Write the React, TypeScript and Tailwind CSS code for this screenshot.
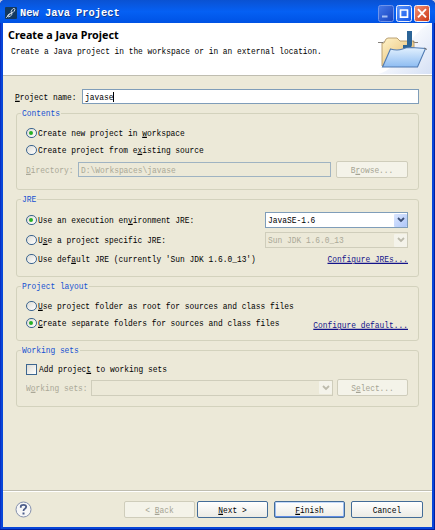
import React from "react";

const mono = "font-['Liberation_Mono','Noto_Sans_CJK_SC',monospace]";

function T({ children, className = "" }: { children: React.ReactNode; className?: string }) {
  return (
    <span className={`block whitespace-pre text-[7.9px] leading-[12px] scale-y-[1.25] ${mono} ${className}`}>
      {children}
    </span>
  );
}

function U({ children }: { children: React.ReactNode }) {
  return <span className="underline decoration-[0.8px] underline-offset-1">{children}</span>;
}

function Radio({ on = false }: { on?: boolean }) {
  return (
    <span className="flex size-[10.5px] shrink-0 items-center justify-center rounded-full border border-[#3d6690] bg-linear-to-br from-[#dddcd5] to-white">
      {on && <span className="size-[4px] rounded-full bg-[#27b027]" />}
    </span>
  );
}

function Option({ on, children }: { on?: boolean; children: React.ReactNode }) {
  return (
    <div className="flex h-[12px] items-center gap-[1.5px]">
      <Radio on={on} />
      <T>{children}</T>
    </div>
  );
}

function Group({ title, className, children }: { title: string; className: string; children: React.ReactNode }) {
  return (
    <section className={`relative ml-[13px] w-[403px] rounded-[3px] border border-[#d3d2bd] ${className}`}>
      <span className="absolute -top-[7px] left-[4px] bg-[#ece9d8] px-[1px] text-[#1450d2]">
        <T>{title}</T>
      </span>
      {children}
    </section>
  );
}

function Button({ kind = "normal", className = "", children }: { kind?: "normal" | "disabled" | "default"; className?: string; children: React.ReactNode }) {
  const look = {
    normal: "border-[#436c98] bg-linear-to-b from-white to-[#ecebe5] text-black",
    disabled: "border-[#cfcdbb] bg-[#f4f3e9] text-[#a5a393]",
    default: "border-[#436c98] bg-linear-to-b from-white to-[#ecebe5] text-black shadow-[inset_0_-1px_0_#5f8ce4,inset_0_1px_0_#c5dafa,inset_1px_0_0_#9dbdf0,inset_-1px_0_0_#9dbdf0]",
  }[kind];
  return (
    <button className={`flex h-[17px] items-center justify-center rounded-[2px] border ${look} ${className}`}>
      <T>{children}</T>
    </button>
  );
}

function Chevron({ disabled = false }: { disabled?: boolean }) {
  return (
    <span className={`flex h-[13px] w-[13px] items-center justify-center rounded-[1px] ${disabled ? "bg-[#f4f3ea] text-[#bdbbac]" : "bg-linear-to-br from-[#dbe6fe] to-[#aec6f8] text-[#3c4f76]"}`}>
      <svg width="8" height="6" viewBox="0 0 8 6" fill="none" stroke="currentColor" strokeWidth="1.8">
        <path d="M1 1 4 4 7 1" />
      </svg>
    </span>
  );
}

function AppIcon() {
  return (
    <svg width="12" height="12" viewBox="0 0 12 12" className="shrink-0">
      <rect width="12" height="12" rx="1" fill="#12385f" />
      <g fill="none" stroke="#d8e1eb" strokeWidth=".9">
        <ellipse cx="8" cy="3.6" rx="1.3" ry="2.5" transform="rotate(35 8 3.6)" />
        <ellipse cx="4.8" cy="8" rx="1.2" ry="2.6" transform="rotate(55 4.8 8)" />
        <path d="M1 10.8 7.5 5" />
      </g>
    </svg>
  );
}

function WindowButton({ kind }: { kind: "min" | "max" | "close" }) {
  return (
    <svg width="16" height="17" viewBox="0 0 16 17">
      <defs>
        <linearGradient id={`w-${kind}`} x1="0" y1="0" x2="1" y2="1">
          <stop stopColor={kind === "close" ? "#f39478" : kind === "max" ? "#5b95fb" : "#4479ea"} />
          <stop offset="1" stopColor={kind === "close" ? "#cb3410" : kind === "max" ? "#1054e8" : "#1742bd"} />
        </linearGradient>
      </defs>
      <rect x=".5" y=".5" width="15" height="16" rx="2" fill={`url(#w-${kind})`} stroke={kind === "min" ? "#6f94ea" : "#edf1fc"} />
      {kind === "min" && <path d="M4 11.5h5.5" stroke="#a6bff4" strokeWidth="2" />}
      {kind === "max" && <path d="M4 5h8M4.5 4.5v7.7h7V4.5" fill="none" stroke="#fff" strokeWidth="1.7" />}
      {kind === "close" && <path d="m4 4.2 8 8.2m0-8.2-8 8.2" stroke="#fff" strokeWidth="1.9" />}
    </svg>
  );
}

function FolderArt() {
  return (
    <svg width="59" height="51" viewBox="0 0 59 51">
      <defs>
        <linearGradient id="sky" x1="0" y1="0" x2="1" y2="1">
          <stop offset=".3" stopColor="#fff" />
          <stop offset="1" stopColor="#d5e0f5" />
        </linearGradient>
        <linearGradient id="front" x1="0" y1="0" x2="0" y2="1">
          <stop stopColor="#e3f1fe" />
          <stop offset="1" stopColor="#8dbcf2" />
        </linearGradient>
        <linearGradient id="back" x1="0" y1="0" x2="1" y2="1">
          <stop stopColor="#fff3c9" />
          <stop offset="1" stopColor="#e2b566" />
        </linearGradient>
      </defs>
      <path d="M59 0v51H5C28 47 34 9 59 0Z" fill="url(#sky)" />
      <path d="M9 20h2l2-4 2-1h9l3 3h14v16L9 43Z" fill="url(#back)" stroke="#b3986a" strokeWidth=".9" />
      <path d="M5 19.5h5l1-1M40 18.5l1.500 1H45" fill="none" stroke="#77736c" strokeWidth=".9" />
      <path d="M34 8h5v13q0 4-3.500 4H30v-3h4Z" fill="#2b6497" />
      <path d="m9.500 44 8-18q7 2 12 0 3-1.500 9-1.500l14 1-8 18.500Z" fill="url(#front)" stroke="#517bb2" strokeWidth="1.1" />
      <path d="m51 25 3 1.500" stroke="#77736c" strokeWidth=".9" />
    </svg>
  );
}

export default function App() {
  return (
    <div className="h-[530px] w-[435px] bg-[#b9c4e4]">
    <div className="flex h-[530px] w-[435px] flex-col overflow-hidden rounded-t-[5px] bg-[#0846d8] text-black shadow-[inset_-1px_-1px_0_#001fa0,inset_1px_0_0_#0a2fc4]">
      <header className="flex h-[23px] shrink-0 items-center bg-linear-to-b from-[#0a52d2] via-[#0560f4] via-50% to-[#0052e4] pt-[3px] pr-[5px] pl-[5px]">
        <AppIcon />
        <span className={`ml-[3px] block whitespace-pre text-[10.4px] leading-[14px] font-bold text-white [text-shadow:1px_1px_0_#123b8e] ${mono}`}>New Java Project</span>
        <div className="ml-auto flex gap-[2px]">
          <WindowButton kind="min" />
          <WindowButton kind="max" />
          <WindowButton kind="close" />
        </div>
      </header>
      <div className="mx-[3px] flex h-[504px] shrink-0 flex-col bg-[#ece9d8]">
        <div className="flex h-[53px] shrink-0 justify-between border-b border-[#bfbdb0] bg-white">
          <div className="pt-[5px] pl-[5px]">
            <h1 className="font-['Noto_Sans',sans-serif] text-[10.75px] leading-[14px] font-bold whitespace-pre">Create a Java Project</h1>
            <div className="pt-[3px] pl-[3px]">
              <T className="text-[7.85px]">Create a Java project in the workspace or in an external location.</T>
            </div>
          </div>
          <FolderArt />
        </div>
        <div className="flex h-[37px] shrink-0 items-start pt-[13px] pl-[12px]">
          <div className="flex h-[15px] w-[67px] items-center">
            <T><U>P</U>roject name:</T>
          </div>
          <div className="flex h-[15px] w-[337px] items-center border border-[#7f9db9] bg-white pl-[2px]">
            <T>javase</T>
            <span className="h-[10px] w-px bg-black" />
          </div>
        </div>

        <Group title="Contents" className="h-[77px] shrink-0">
          <div className="flex flex-col gap-[5px] pt-[13px] pl-[9px]">
            <Option on>Create new project in <U>w</U>orkspace</Option>
            <Option>Create project from e<U>x</U>isting source</Option>
          </div>
          <div className="flex items-center pt-[5px] pl-[9px] text-[#aaa897]">
            <div className="w-[52px]"><T><U>D</U>irectory:</T></div>
            <div className="flex h-[15px] w-[253px] items-center border border-[#9fb3c2] pl-[2px]">
              <T>D:\Workspaces\javase</T>
            </div>
            <Button kind="disabled" className="ml-[5px] w-[72px]">B<U>r</U>owse...</Button>
          </div>
        </Group>

        <Group title="JRE" className="mt-[9px] h-[78px] shrink-0">
          <div className="flex items-center justify-between pt-[12px] pr-[10px] pl-[9px]">
            <Option on>Use an execution en<U>v</U>ironment JRE:</Option>
            <div className="flex h-[16px] w-[143px] items-center justify-between border border-[#7f9db9] bg-white pl-[2px]">
              <T>JavaSE-1.6</T>
              <Chevron />
            </div>
          </div>
          <div className="flex items-center justify-between pt-[4px] pr-[10px] pl-[9px]">
            <Option>U<U>s</U>e a project specific JRE:</Option>
            <div className="flex h-[16px] w-[143px] items-center justify-between border border-[#cfcdbb] pl-[2px] text-[#aaa897]">
              <T>Sun JDK 1.6.0_13</T>
              <Chevron disabled />
            </div>
          </div>
          <div className="flex items-center justify-between pt-[5px] pr-[10px] pl-[9px]">
            <Option>Use def<U>a</U>ult JRE (currently 'Sun JDK 1.6.0_13')</Option>
            <T className="text-[#14148a] underline">Configure JREs...</T>
          </div>
        </Group>

        <Group title="Project layout" className="mt-[9px] h-[55px] shrink-0">
          <div className="pt-[13px] pl-[9px]">
            <Option><U>U</U>se project folder as root for sources and class files</Option>
          </div>
          <div className="flex justify-between pt-[5px] pr-[10px] pl-[9px]">
            <Option on><U>C</U>reate separate folders for sources and class files</Option>
            <T className="mt-[2px] text-[#14148a] underline">Configure default...</T>
          </div>
        </Group>

        <Group title="Working sets" className="mt-[9px] h-[57px] shrink-0">
          <div className="mt-[12px] flex h-[12px] items-center gap-[2px] pl-[9px]">
            <span className="size-[11px] border border-[#3d6690] bg-linear-to-br from-[#dddcd5] to-white" />
            <T>Add projec<U>t</U> to working sets</T>
          </div>
          <div className="flex items-center pt-[4px] pl-[9px] text-[#aaa897]">
            <div className="w-[65px]"><T>W<U>o</U>rking sets:</T></div>
            <div className="flex h-[16px] w-[242px] items-center justify-end border border-[#cfcdbb]">
              <Chevron disabled />
            </div>
            <Button kind="disabled" className="ml-[4px] w-[71px]">S<U>e</U>lect...</Button>
          </div>
        </Group>

        <footer className="mt-auto flex h-[37px] shrink-0 items-start border-t border-[#bfbdb0] pt-[10px] pl-[12px] shadow-[inset_0_1px_0_#fff]">
          <svg width="17" height="17" viewBox="0 0 17 17" fill="none">
            <circle cx="8.5" cy="8.5" r="7.5" fill="#f7f7f7" stroke="#8490ad" />
            <path d="M5.800 6.700V5.500q0-1.700 2.700-1.700t2.700 2q0 1.200-1.300 1.900T8.500 10" stroke="#4c5d8a" strokeWidth="1.8" />
            <path d="M8.500 11.500v2" stroke="#4c5d8a" strokeWidth="2" />
          </svg>
          <Button kind="disabled" className="ml-[92px] w-[71px]">&lt; <U>B</U>ack</Button>
          <Button className="ml-[2px] w-[71px]"><U>N</U>ext &gt;</Button>
          <Button kind="default" className="ml-[6px] w-[71px]"><U>F</U>inish</Button>
          <Button className="ml-[6px] w-[72px]">Cancel</Button>
        </footer>
      </div>
    </div>
    </div>
  );
}
